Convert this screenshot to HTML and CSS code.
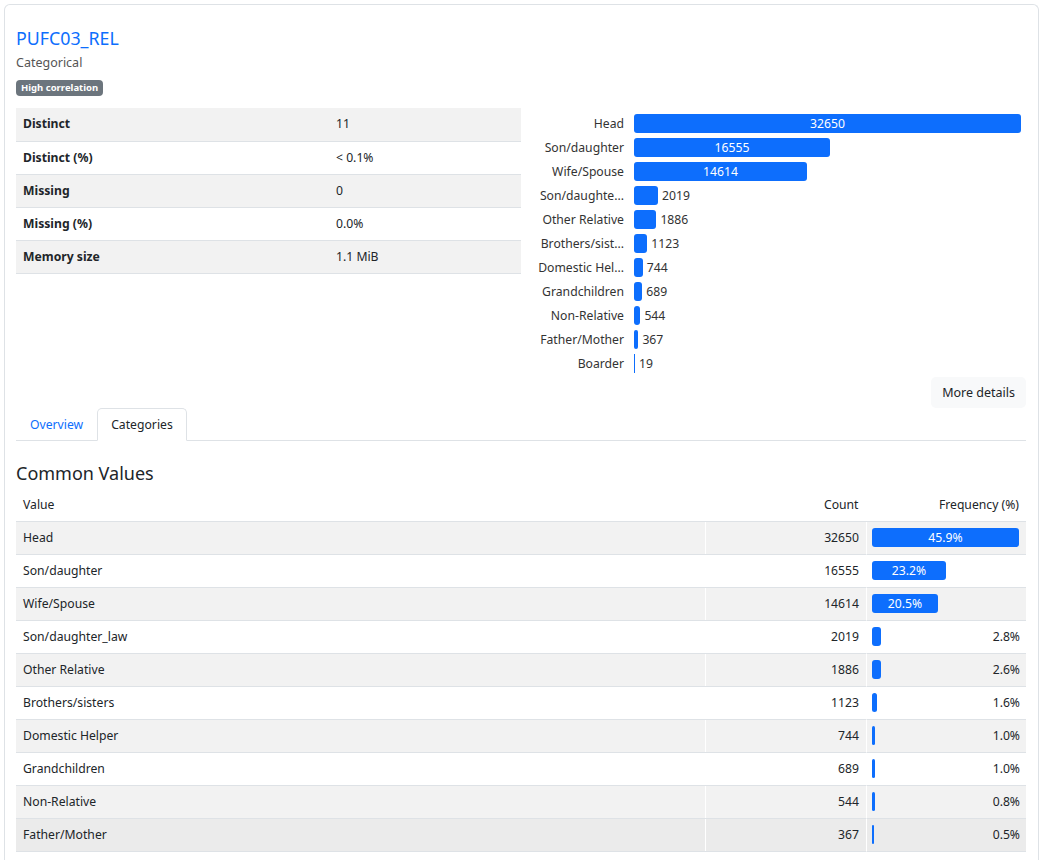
FILE: index.html
```html
<!DOCTYPE html>
<html>
<head>
<meta charset="utf-8">
<link rel="stylesheet" href="styles.css">
</head>
<body>
<div class="card">
  <div class="head">
    <a class="title">PUFC03_REL</a>
    <div class="subtitle">Categorical</div>
    <span class="badge">High correlation</span>
  </div>
  <div class="top">
    <table class="stats">
      <tr><th>Distinct</th><td>11</td></tr>
      <tr><th>Distinct (%)</th><td>&lt; 0.1%</td></tr>
      <tr><th>Missing</th><td>0</td></tr>
      <tr><th>Missing (%)</th><td>0.0%</td></tr>
      <tr><th>Memory size</th><td>1.1 MiB</td></tr>
    </table>
    <div class="chart">
      <div class="lbl">Head</div><div class="track"><div class="bar in" style="width:387px">32650</div></div>
      <div class="lbl">Son/daughter</div><div class="track"><div class="bar in" style="width:196px">16555</div></div>
      <div class="lbl">Wife/Spouse</div><div class="track"><div class="bar in" style="width:173px">14614</div></div>
      <div class="lbl">Son/daughte...</div><div class="track"><div class="bar" style="width:24px"></div><span class="val">2019</span></div>
      <div class="lbl">Other Relative</div><div class="track"><div class="bar" style="width:22.4px"></div><span class="val">1886</span></div>
      <div class="lbl">Brothers/sist...</div><div class="track"><div class="bar" style="width:13.3px"></div><span class="val">1123</span></div>
      <div class="lbl">Domestic Hel...</div><div class="track"><div class="bar" style="width:8.8px"></div><span class="val">744</span></div>
      <div class="lbl">Grandchildren</div><div class="track"><div class="bar" style="width:8.2px"></div><span class="val">689</span></div>
      <div class="lbl">Non-Relative</div><div class="track"><div class="bar" style="width:6.4px"></div><span class="val">544</span></div>
      <div class="lbl">Father/Mother</div><div class="track"><div class="bar" style="width:4.4px"></div><span class="val">367</span></div>
      <div class="lbl">Boarder</div><div class="track"><div class="bar thin" style="width:1px"></div><span class="val">19</span></div>
    </div>
  </div>
  <div class="actions"><button class="btn">More details</button></div>
  <div class="tabs">
    <a class="tab">Overview</a>
    <a class="tab active">Categories</a>
  </div>
  <h4 class="section">Common Values</h4>
  <table class="freq">
    <thead>
      <tr><th class="c-val">Value</th><th class="c-cnt">Count</th><th class="c-frq">Frequency (%)</th></tr>
    </thead>
    <tbody>
      <tr><td>Head</td><td class="num">32650</td><td class="fq"><div class="fbar in" style="width:147px">45.9%</div></td></tr>
      <tr><td>Son/daughter</td><td class="num">16555</td><td class="fq"><div class="fbar in" style="width:74px">23.2%</div></td></tr>
      <tr><td>Wife/Spouse</td><td class="num">14614</td><td class="fq"><div class="fbar in" style="width:66px">20.5%</div></td></tr>
      <tr><td>Son/daughter_law</td><td class="num">2019</td><td class="fq"><div class="fbar" style="width:9px"></div><span class="pct">2.8%</span></td></tr>
      <tr><td>Other Relative</td><td class="num">1886</td><td class="fq"><div class="fbar" style="width:8.5px"></div><span class="pct">2.6%</span></td></tr>
      <tr><td>Brothers/sisters</td><td class="num">1123</td><td class="fq"><div class="fbar" style="width:5.1px"></div><span class="pct">1.6%</span></td></tr>
      <tr><td>Domestic Helper</td><td class="num">744</td><td class="fq"><div class="fbar" style="width:3.4px"></div><span class="pct">1.0%</span></td></tr>
      <tr><td>Grandchildren</td><td class="num">689</td><td class="fq"><div class="fbar" style="width:3.1px"></div><span class="pct">1.0%</span></td></tr>
      <tr><td>Non-Relative</td><td class="num">544</td><td class="fq"><div class="fbar" style="width:2.5px"></div><span class="pct">0.8%</span></td></tr>
      <tr class="hover"><td>Father/Mother</td><td class="num">367</td><td class="fq"><div class="fbar" style="width:1.6px"></div><span class="pct">0.5%</span></td></tr>
    </tbody>
  </table>
</div>
</body>
</html>
```

FILE: styles.css
```css
* { box-sizing: border-box; }
html, body { margin: 0; padding: 0; background: #fff; }
body {
  font-family: "Segoe UI", "Noto Sans", "Open Sans", sans-serif;
  font-size: 12.2px;
  color: #212529;
}
.card {
  margin: 4px 5px 0 4px;
  border: 1px solid #dee2e6;
  border-bottom: none;
  border-radius: 6px 6px 0 0;
  padding: 20px 12px 8px 11px;
}
.head { display: flex; flex-direction: column; align-items: flex-start; }
.title {
  color: #0d6efd;
  font-size: 17.8px;
  line-height: 26px;
}
.subtitle {
  color: #555;
  font-size: 12.5px;
  line-height: 20px;
  margin-top: 2px;
}
.badge {
  margin-top: 7px;
  background: #6c757d;
  color: #fff;
  font-size: 9.5px;
  font-weight: 700;
  line-height: 16px;
  padding: 0 5px;
  border-radius: 4px;
}
.top {
  display: grid;
  grid-template-columns: 505px 1fr;
  margin-top: 12px;
}
.stats {
  border-collapse: collapse;
  width: 505px;
  align-self: start;
}
.stats th, .stats td {
  text-align: left;
  padding: 0 7px;
  height: 33px;
  border-bottom: 1px solid #dee2e6;
  line-height: 20px;
}
.stats th { font-weight: 700; width: 313px; }
.stats tr:nth-child(odd) { background: #f2f2f2; }
.chart {
  display: grid;
  grid-template-columns: 103px 1fr;
  grid-auto-rows: 24px;
  column-gap: 10px;
  margin-top: 3px;
  color: #333;
}
.lbl {
  text-align: right;
  line-height: 24px;
  white-space: nowrap;
  padding-top: 1px;
}
.track {
  display: flex;
  align-items: center;
  gap: 4px;
}
.bar {
  height: 19px;
  background: #0d6efd;
  border-radius: 3px;
  flex: none;
}
.bar.thin { border-radius: 0; }
.bar.in {
  color: #fff;
  text-align: center;
  line-height: 19px;
}
.val { line-height: 19px; }
.actions {
  display: flex;
  justify-content: flex-end;
  margin-top: 2px;
}
.btn {
  font: inherit;
  font-size: 12.5px;
  color: #212529;
  background: #f8f9fa;
  border: none;
  border-radius: 5px;
  height: 31px;
  padding: 0 11px;
}
.tabs {
  display: flex;
  border-bottom: 1px solid #dee2e6;
}
.tab {
  color: #0d6efd;
  line-height: 31px;
  padding: 0 13px;
  border: 1px solid transparent;
  border-radius: 5px 5px 0 0;
  margin-bottom: -1px;
}
.tab.active {
  color: #212529;
  background: #fff;
  border-color: #dee2e6 #dee2e6 #fff;
}
.section {
  font-size: 18px;
  font-weight: 400;
  margin: 19px 0 4px;
  line-height: 26px;
}
.freq {
  width: 100%;
  border-collapse: collapse;
}
.freq th, .freq td {
  padding: 0 7px 0 7px;
  height: 33px;
  line-height: 20px;
  border-bottom: 1px solid #dee2e6;
}
.freq th { font-weight: 400; text-align: left; height: 31px; }
.freq th.c-cnt, .freq th.c-frq { text-align: right; }
.freq td + td, .freq th + th { border-left: 1px solid #fff; }
.freq .c-val { width: 689px; }
.freq .c-cnt { width: 161px; }
.freq tbody tr:nth-child(odd) { background: #f2f2f2; }
.freq tbody tr.hover { background: #ebebeb; }
.num { text-align: right; }
.freq td.fq { padding: 0 6px 0 5px; }
.fq { display: flex; align-items: center; height: 33px; }
.fbar {
  height: 19px;
  background: #0d6efd;
  border-radius: 3px;
  flex: none;
}
.fbar.in {
  color: #fff;
  text-align: center;
  line-height: 19px;
}
.pct { margin-left: auto; }
```
